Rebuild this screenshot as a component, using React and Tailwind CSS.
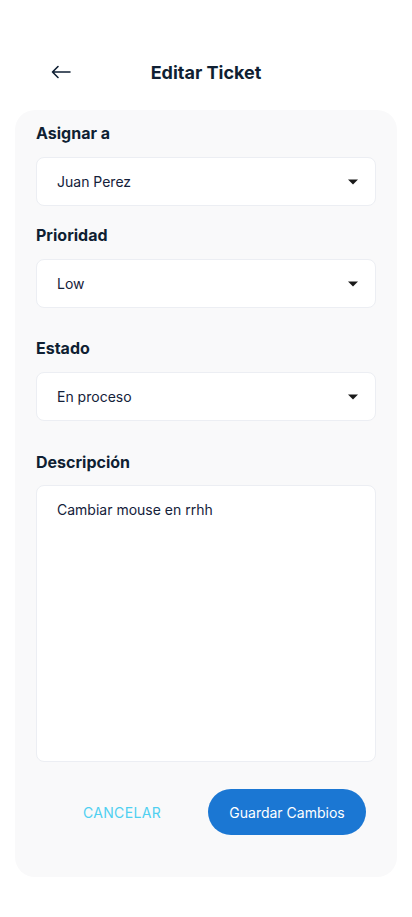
const Caret = () => (
  <svg width="12" height="8" viewBox="0 0 12 8" className="fill-[#1a1a1a]">
    <path d="M1 1.5h10L6 6.5z" />
  </svg>
);

const BackArrow = () => (
  <svg width="20" height="14" viewBox="0 0 20 14" fill="none" stroke="#0f1f33" strokeWidth="1.6" strokeLinecap="round" strokeLinejoin="round">
    <path d="M19 7H1.5M7 1.5L1.5 7L7 12.5" />
  </svg>
);

const SelectBox = ({ value }) => (
  <div className="flex h-[49px] items-center justify-between rounded-lg border border-[#eceef3] bg-white pl-5 pr-4">
    <span className="text-[14px] text-[#14213a]">{value}</span>
    <Caret />
  </div>
);

const Label = ({ children, className = "" }) => (
  <div className={`text-[16px] font-bold leading-5 text-[#0f1f33] ${className}`}>
    {children}
  </div>
);

export default function App() {
  return (
    <div
      className="min-h-[917px] w-[412px] bg-white"
      style={{ fontFamily: "Inter, 'Noto Sans', sans-serif" }}
    >
      {/* Header */}
      <div className="relative h-[72px]">
        <button className="absolute left-[51px] top-[65px]">
          <BackArrow />
        </button>
        <h1 className="absolute left-0 right-0 top-[62px] text-center text-[18px] font-bold leading-[22px] text-[#0f1f33]">
          Editar Ticket
        </h1>
      </div>

      {/* Card */}
      <div className="mx-[15px] mt-[38px] rounded-[20px] bg-[#f9f9fa] px-[21px] pb-[42px] pt-[13px]">
        <Label>Asignar a</Label>
        <div className="mt-[14px]">
          <SelectBox value="Juan Perez" />
        </div>

        <Label className="mt-[19px]">Prioridad</Label>
        <div className="mt-[14px]">
          <SelectBox value="Low" />
        </div>

        <Label className="mt-[30px]">Estado</Label>
        <div className="mt-[14px]">
          <SelectBox value="En proceso" />
        </div>

        <Label className="mt-[31px]">Descripción</Label>
        <div className="mt-[13px] h-[277px] rounded-lg border border-[#eceef3] bg-white px-5 pt-[13px]">
          <p className="text-[14px] text-[#14213a]">Cambiar mouse en rrhh</p>
        </div>

        <div className="mt-[27px] flex items-center">
          <button className="w-[172px] text-center text-[14px] tracking-wide text-[#4fd0f1]">
            CANCELAR
          </button>
          <button className="ml-auto mr-[10px] h-[46px] w-[158px] rounded-full bg-[#1b77d3] text-[14px] font-normal text-white">
            Guardar Cambios
          </button>
        </div>
      </div>
    </div>
  );
}
